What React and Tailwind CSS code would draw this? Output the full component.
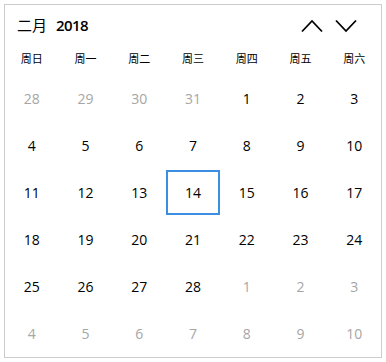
const WEEKDAYS = ['周日', '周一', '周二', '周三', '周四', '周五', '周六'];

function buildDays() {
  const days = [];
  [28, 29, 30, 31].forEach((d) => days.push({ d, out: true }));
  for (let d = 1; d <= 28; d++) days.push({ d, out: false });
  for (let d = 1; d <= 10; d++) days.push({ d, out: true });
  return days;
}

function Chevron({ up }) {
  return (
    <svg width="22" height="14" viewBox="0 0 22 14" fill="none">
      <path
        d={up ? 'M1 12.5 L11 2 L21 12.5' : 'M1 1.5 L11 12 L21 1.5'}
        stroke="#000"
        strokeWidth="1.8"
      />
    </svg>
  );
}

export default function App() {
  const days = buildDays();

  return (
    <div
      className="w-[386px] h-[362px] bg-white p-1"
      style={{ fontFamily: '"Open Sans", "Noto Sans CJK SC", sans-serif' }}
    >
      <div className="h-[354px] border border-[#cccccc] flex flex-col">
        {/* Header */}
        <div className="h-[39px] flex items-center justify-between pl-[12px] pr-[24px] pt-[1px]">
          <div className="flex items-baseline gap-[9px] text-[15px] text-black">
            <span>二月</span>
            <span className="font-semibold tracking-[-0.6px]">2018</span>
          </div>
          <div className="flex items-center gap-[12px] pt-[2px]">
            <Chevron up />
            <Chevron />
          </div>
        </div>

        {/* Weekdays */}
        <div className="grid grid-cols-7 h-[31px] items-center text-[11px] text-black">
          {WEEKDAYS.map((w) => (
            <div key={w} className="text-center">{w}</div>
          ))}
        </div>

        {/* Days */}
        <div className="grid grid-cols-7 grid-rows-6 flex-1">
          {days.map((day, i) => {
            const selected = !day.out && day.d === 14;
            return (
              <div
                key={i}
                className={
                  'flex items-center justify-center text-[14px] ' +
                  (day.out ? 'text-[#a6a6a6] ' : 'text-black ') +
                  (selected ? 'border-2 border-[#3b8ee0] my-[1px]' : '')
                }
              >
                {day.d}
              </div>
            );
          })}
        </div>
      </div>
    </div>
  );
}
